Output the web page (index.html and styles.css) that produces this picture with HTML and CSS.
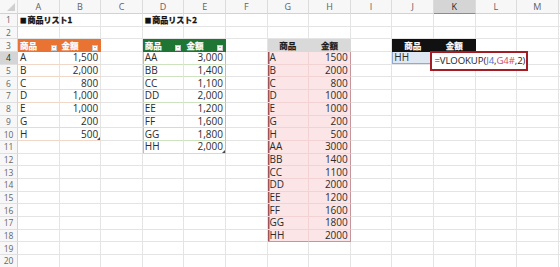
FILE: index.html
```html
<!DOCTYPE html>
<html lang="ja">
<head>
<meta charset="utf-8">
<title>VLOOKUP</title>
<link rel="stylesheet" href="styles.css">
</head>
<body>
<table class="sheet">
<colgroup>
<col class="rh"><col class="c"><col class="c"><col class="c"><col class="c"><col class="c"><col class="c"><col class="c"><col class="c"><col class="c"><col class="c"><col class="c"><col class="c"><col class="c"><col class="nc">
</colgroup>
<thead>
<tr><th class="corner"><svg width="18" height="13" viewBox="0 0 18 13"><polygon points="15,3 15,11 7,11" fill="#cfcfcf"/></svg></th><th>A</th><th>B</th><th>C</th><th>D</th><th>E</th><th>F</th><th>G</th><th>H</th><th>I</th><th>J</th><th class="act">K</th><th>L</th><th>M</th><th></th></tr>
</thead>
<tbody>
<tr><th>1</th><td class="t"><span class="sq">■</span>商品リスト1</td><td></td><td></td><td class="t"><span class="sq">■</span>商品リスト2</td><td></td><td></td><td></td><td></td><td></td><td></td><td></td><td></td><td></td><td></td></tr>
<tr><th>2</th><td></td><td></td><td></td><td></td><td></td><td></td><td></td><td></td><td></td><td></td><td></td><td></td><td></td><td></td></tr>
<tr><th>3</th>
<td class="t1h"><div class="hc"><span class="jp">商品</span><span class="fb"></span></div></td>
<td class="t1h"><div class="hc"><span class="jp">金額</span><span class="fb"></span></div></td>
<td></td>
<td class="t2h"><div class="hc"><span class="jp">商品</span><span class="fb"></span></div></td>
<td class="t2h"><div class="hc"><span class="jp">金額</span><span class="fb"></span></div></td>
<td></td>
<td class="sh"><span class="jp">商品</span></td><td class="sh"><span class="jp">金額</span></td>
<td></td>
<td class="jh"><span class="jp">商品</span></td><td class="jh"><span class="jp">金額</span></td>
<td></td><td></td><td></td></tr>
<tr><th class="act">4</th><td class="t1">A</td><td class="t1 n">1,500</td><td></td><td class="t2 t2l">AA</td><td class="t2 t2r n">3,000</td><td></td><td class="sp spl">A</td><td class="sp spr n">1500</td><td></td><td class="ref">HH</td><td class="edc"><div class="edit">=VLOOKUP(<span class="rj">J4</span>,<span class="rg">G4#</span>,2)</div></td><td></td><td></td><td></td></tr>
<tr><th>5</th><td class="t1">B</td><td class="t1 n">2,000</td><td></td><td class="t2 t2l">BB</td><td class="t2 t2r n">1,400</td><td></td><td class="sp spl">B</td><td class="sp spr n">2000</td><td></td><td></td><td></td><td></td><td></td><td></td></tr>
<tr><th>6</th><td class="t1">C</td><td class="t1 n">800</td><td></td><td class="t2 t2l">CC</td><td class="t2 t2r n">1,100</td><td></td><td class="sp spl">C</td><td class="sp spr n">800</td><td></td><td></td><td></td><td></td><td></td><td></td></tr>
<tr><th>7</th><td class="t1">D</td><td class="t1 n">1,000</td><td></td><td class="t2 t2l">DD</td><td class="t2 t2r n">2,000</td><td></td><td class="sp spl">D</td><td class="sp spr n">1000</td><td></td><td></td><td></td><td></td><td></td><td></td></tr>
<tr><th>8</th><td class="t1">E</td><td class="t1 n">1,000</td><td></td><td class="t2 t2l">EE</td><td class="t2 t2r n">1,200</td><td></td><td class="sp spl">E</td><td class="sp spr n">1000</td><td></td><td></td><td></td><td></td><td></td><td></td></tr>
<tr><th>9</th><td class="t1">G</td><td class="t1 n">200</td><td></td><td class="t2 t2l">FF</td><td class="t2 t2r n">1,600</td><td></td><td class="sp spl">G</td><td class="sp spr n">200</td><td></td><td></td><td></td><td></td><td></td><td></td></tr>
<tr><th>10</th><td class="t1">H</td><td class="t1 n rz">500</td><td></td><td class="t2 t2l">GG</td><td class="t2 t2r n">1,800</td><td></td><td class="sp spl">H</td><td class="sp spr n">500</td><td></td><td></td><td></td><td></td><td></td><td></td></tr>
<tr><th>11</th><td></td><td></td><td></td><td class="t2 t2l">HH</td><td class="t2 t2r n rz">2,000</td><td></td><td class="sp spl">AA</td><td class="sp spr n">3000</td><td></td><td></td><td></td><td></td><td></td><td></td></tr>
<tr><th>12</th><td></td><td></td><td></td><td></td><td></td><td></td><td class="sp spl">BB</td><td class="sp spr n">1400</td><td></td><td></td><td></td><td></td><td></td><td></td></tr>
<tr><th>13</th><td></td><td></td><td></td><td></td><td></td><td></td><td class="sp spl">CC</td><td class="sp spr n">1100</td><td></td><td></td><td></td><td></td><td></td><td></td></tr>
<tr><th>14</th><td></td><td></td><td></td><td></td><td></td><td></td><td class="sp spl">DD</td><td class="sp spr n">2000</td><td></td><td></td><td></td><td></td><td></td><td></td></tr>
<tr><th>15</th><td></td><td></td><td></td><td></td><td></td><td></td><td class="sp spl">EE</td><td class="sp spr n">1200</td><td></td><td></td><td></td><td></td><td></td><td></td></tr>
<tr><th>16</th><td></td><td></td><td></td><td></td><td></td><td></td><td class="sp spl">FF</td><td class="sp spr n">1600</td><td></td><td></td><td></td><td></td><td></td><td></td></tr>
<tr><th>17</th><td></td><td></td><td></td><td></td><td></td><td></td><td class="sp spl">GG</td><td class="sp spr n">1800</td><td></td><td></td><td></td><td></td><td></td><td></td></tr>
<tr><th>18</th><td></td><td></td><td></td><td></td><td></td><td></td><td class="sp spl spb">HH</td><td class="sp spr spb n">2000</td><td></td><td></td><td></td><td></td><td></td><td></td></tr>
<tr><th>19</th><td></td><td></td><td></td><td></td><td></td><td></td><td></td><td></td><td></td><td></td><td></td><td></td><td></td><td></td></tr>
<tr><th>20</th><td></td><td></td><td></td><td></td><td></td><td></td><td></td><td></td><td></td><td></td><td></td><td></td><td></td><td></td></tr>
</tbody>
</table>
</body>
</html>
```
FILE: styles.css
```css
* { box-sizing: border-box; }
html, body { margin: 0; padding: 0; background: #fff; }
body {
  width: 560px;
  height: 267px;
  overflow: hidden;
  font-family: "Open Sans", "Noto Sans CJK JP", sans-serif;
}
.sheet {
  border-collapse: separate;
  border-spacing: 0;
  table-layout: fixed;
  width: 571px;
}
col.rh { width: 18px; }
col.c { width: 41.6px; }
col.nc { width: 12.2px; }

.sheet th, .sheet td {
  padding: 0 2px;
  border: 0;
  border-right: 1px solid #e4e4e4;
  border-bottom: 1px solid #e4e4e4;
  white-space: nowrap;
  overflow: visible;
  font-weight: normal;
}
.sheet thead th {
  height: 13.3px;
  background: #f7f7f7;
  border-right-color: #dcdcdc;
  border-bottom-color: #d2d2d2;
  color: #616161;
  font-size: 9px;
  line-height: 12px;
  text-align: center;
}
.sheet thead th.corner { padding: 0; line-height: 0; }
.corner svg { display: block; }
.sheet tbody tr { height: 12.7px; }
.sheet tbody th {
  background: #f7f7f7;
  border-right-color: #d2d2d2;
  border-bottom-color: #e0e0e0;
  color: #666;
  font-size: 8.5px;
  line-height: 11px;
  text-align: center;
}
.sheet td {
  font-size: 10px;
  line-height: 11px;
  color: #2c2c2c;
}
.sheet .act {
  background: #d5d5d5;
  color: #262626;
}
.sheet thead th.act { border-bottom-color: #8c8c8c; }

.n { text-align: right; }
.jp {
  font-family: "Noto Sans CJK JP", sans-serif;
  font-weight: 700;
  font-size: 8.5px;
  -webkit-text-stroke: 0.25px currentColor;
}
.sheet td.t {
  font-family: "Noto Sans CJK JP", sans-serif;
  font-weight: 700;
  font-size: 8px;
  color: #111;
  -webkit-text-stroke: 0.35px #111;
}
.sq { font-size: 6.5px; margin-right: 1px; vertical-align: 0.5px; }

.hc {
  display: flex;
  justify-content: space-between;
  align-items: flex-end;
  height: 11px;
}
.hc .jp { line-height: 10px; align-self: flex-start; }
.fb {
  width: 6px;
  height: 6px;
  background: #fbfbfb;
  border: 1px solid #c8c8c8;
  position: relative;
}
.fb::after {
  content: "";
  position: absolute;
  left: 1px;
  top: 1.5px;
  border-left: 1px solid transparent;
  border-right: 1px solid transparent;
  border-top: 1.5px solid #777;
}

.sheet td.t1h {
  background: #e97332;
  color: #fff;
  border-right-color: #e97332;
  border-bottom-color: #e97332;
}
.sheet td.t2h {
  background: #1f7634;
  color: #fff;
  border-right-color: #1f7634;
  border-bottom-color: #1f7634;
}
.sheet td.t1 { border-bottom-color: #f0d7c8; }
.sheet td.t2 { border-bottom-color: #cde3c0; }
.sheet td.t2l { box-shadow: inset 1px 0 #acd091; }
.sheet td.t2r { border-right-color: #acd091; }
.rz { position: relative; }
.rz::after {
  content: "";
  position: absolute;
  right: 0;
  bottom: 0;
  border-left: 3px solid transparent;
  border-bottom: 3px solid #4a4a4a;
}

.sheet td.sh {
  background: #d9d9d9;
  color: #1a1a1a;
  text-align: center;
  border-right-color: #d9d9d9;
  border-bottom-color: #d9d9d9;
}
.sheet td.sp {
  background: #fbe5e6;
  border-bottom-color: #f3d2d3;
  border-right-color: #f3d2d3;
}
.sheet td.spl { box-shadow: inset 1.5px 0 #9c5358; }
.sheet td.spr { border-right-color: #c4959a; }
.sheet td.spb { border-bottom-color: #c4959a; }

.sheet td.jh {
  background: #111;
  color: #fff;
  text-align: center;
  border-right-color: #111;
  border-bottom-color: #111;
}
.sheet td.ref {
  background: #dfe7f3;
  box-shadow: inset 1px 0 #8faad6, inset 0 -1px #8faad6;
}
.edc { position: relative; }
.edit {
  position: absolute;
  left: -3.5px;
  top: -1px;
  width: 98px;
  height: 20px;
  border: 2px solid #a41c24;
  background: #fff;
  z-index: 2;
  padding: 0 0 0 2px;
  font-size: 9.6px;
  line-height: 16px;
  color: #1e1e1e;
  letter-spacing: -0.1px;
}
.rj { color: #4b6fcf; }
.rg { color: #cf4c5e; }
```
